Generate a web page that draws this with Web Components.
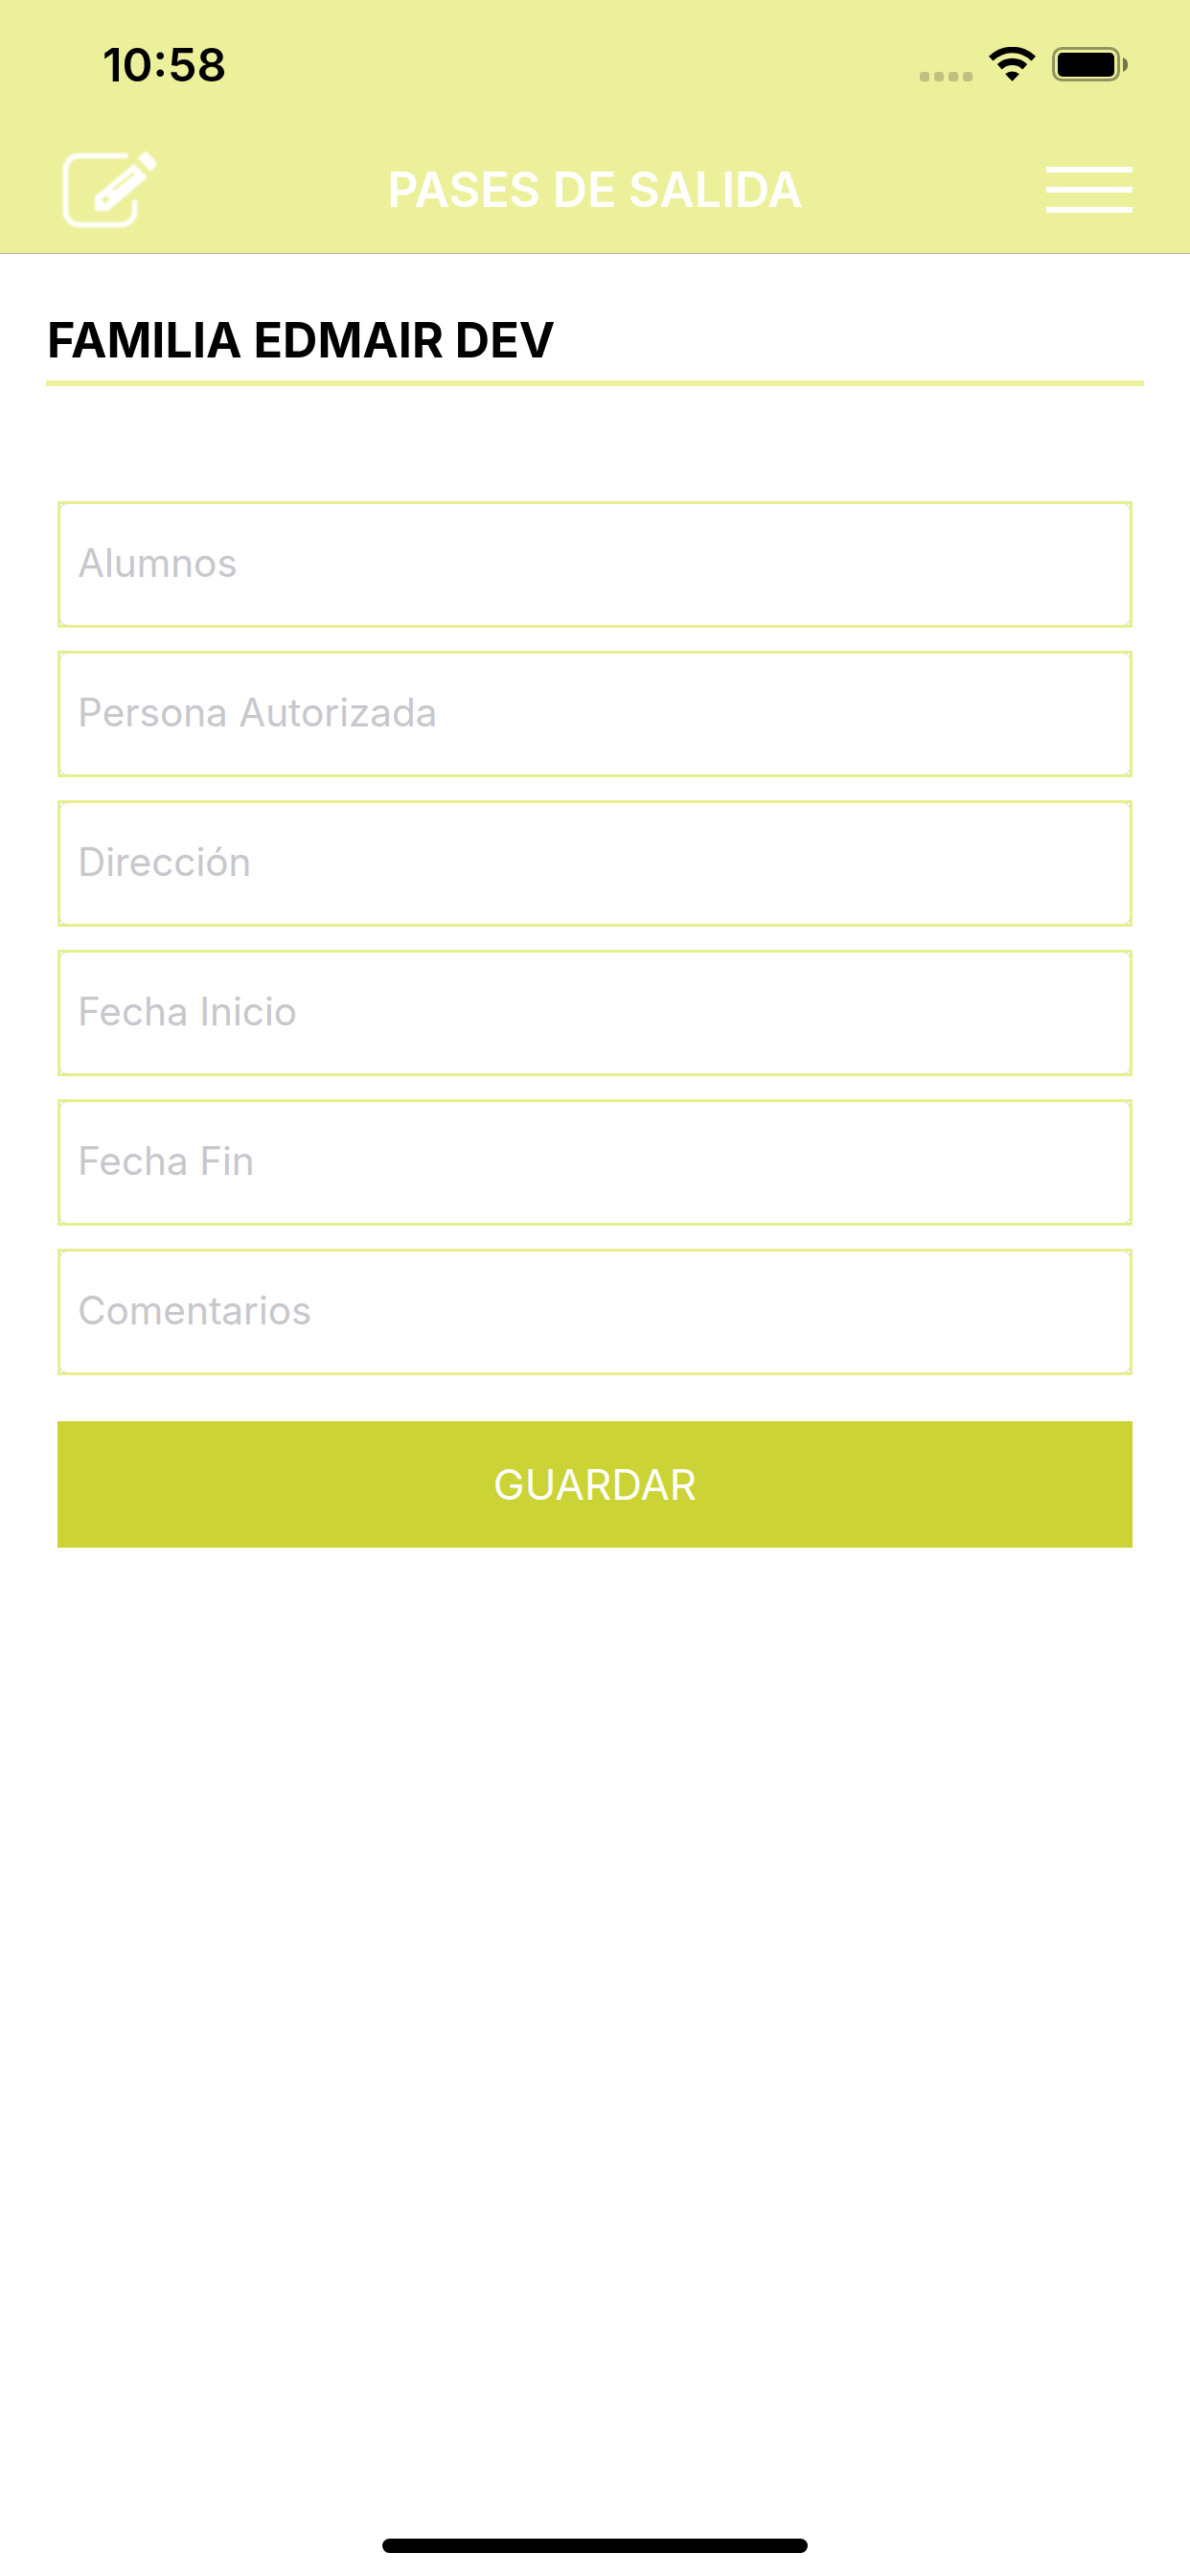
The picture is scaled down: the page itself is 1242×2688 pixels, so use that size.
<!DOCTYPE html>
<html>
<head>
<meta charset="utf-8">
<style>
  html, body { margin: 0; padding: 0; background: #fff; }
  body { width: 1242px; height: 2688px; position: relative; overflow: hidden; font-family: Inter, "Liberation Sans", sans-serif; }
</style>
</head>
<body>
<app-header title="PASES DE SALIDA"></app-header>
<family-title>FAMILIA EDMAIR DEV</family-title>
<pass-form>
  <form-field>Alumnos</form-field>
  <form-field>Persona Autorizada</form-field>
  <form-field>Dirección</form-field>
  <form-field>Fecha Inicio</form-field>
  <form-field>Fecha Fin</form-field>
  <form-field>Comentarios</form-field>
  <save-button>GUARDAR</save-button>
</pass-form>
<home-indicator></home-indicator>

<script>
class AppHeader extends HTMLElement {
  connectedCallback() {
    this.attachShadow({ mode: 'open' });
    this.shadowRoot.innerHTML = `
      <style>
        :host {
          display: block;
          height: 265px;
          box-sizing: border-box;
          background: #edf09b;
          border-bottom: 1px solid #b2b2ae;
        }
        .status {
          height: 136px;
          display: flex;
          align-items: flex-start;
          justify-content: space-between;
          padding: 0 0 0 107px;
        }
        .time {
          margin-top: 42px;
          font: 600 48.5px/52px Inter, "Liberation Sans", sans-serif;
          color: #000;
        }
        .icons { display: flex; align-items: flex-start; padding-right: 65px; }
        .dots { display: flex; gap: 5px; margin: 75px 17px 0 0; }
        .dots i { width: 10px; height: 10px; border-radius: 3px; background: #c0c080; }
        .bar {
          display: grid;
          grid-template-columns: 1fr auto 1fr;
          align-items: center;
          height: 124px;
        }
        h1 {
          margin: 0;
          font: 600 50.2px/56px Inter, "Liberation Sans", sans-serif;
          color: #fff;
        }
        svg { display: block; }
        .edit { margin-left: 60px; filter: blur(0.8px); }
        .menu {
          justify-self: end;
          margin-right: 60px;
          width: 90px;
          display: flex;
          flex-direction: column;
          gap: 15px;
        }
        .menu i { height: 6px; background: #fff; display: block; }
      </style>
      <div class="status">
        <span class="time">10:58</span>
        <div class="icons">
          <div class="dots"><i></i><i></i><i></i><i></i></div>
          <svg width="49" height="36" viewBox="0 0 50 36" style="margin:49px 17px 0 0">
            <path d="M0 9.500 A36 36 0 0 1 50 9.500 L45.500 14.500 A29 29 0 0 0 4.500 14.500Z" fill="#000"/>
            <path d="M9 18 A23 23 0 0 1 41 18 L36 23.500 A16 16 0 0 0 14 23.500Z" fill="#000"/>
            <path d="M17.500 28.500 A11 11 0 0 1 32.500 28.500 L25 36Z" fill="#000"/>
          </svg>
          <svg width="79" height="37" viewBox="0 0 79 37" style="margin:49px 0 0 0">
            <rect x="1.500" y="1.500" width="68" height="33" rx="9" fill="none" stroke="#93955e" stroke-width="3"/>
            <rect x="6" y="6" width="59" height="25" rx="5" fill="#000"/>
            <path d="M74 11 A8 8 0 0 1 74 26Z" fill="#74764b"/>
          </svg>
        </div>
      </div>
      <div class="bar">
        <svg class="edit" width="106" height="84" viewBox="60 156 106 84">
          <path d="M131 162.500 H82 A14 14 0 0 0 68.500 176 V221 A14 14 0 0 0 82 234.500 H127 A14 14 0 0 0 140.500 221 V211" fill="none" stroke="#fff" stroke-width="5.500" stroke-linecap="round"/>
          <path d="M99 220 V205 L140 171 L154 185 L113 220 Z M117 197 L118.500 199.500 L141 181.500 L139.500 179 Z M106 208 L111 204 L115 209 L111 209.500 L110.500 214 Z" fill="#fff" fill-rule="evenodd"/>
          <path d="M144 165 L149 160 Q152 157 155 160 L162 168 Q165 171 162 174 L157 179 Z" fill="#fff"/>
        </svg>
        <h1>${this.getAttribute('title')}</h1>
        <div class="menu"><i></i><i></i><i></i></div>
      </div>
    `;
  }
}

class FamilyTitle extends HTMLElement {
  connectedCallback() {
    this.attachShadow({ mode: 'open' });
    this.shadowRoot.innerHTML = `
      <style>
        :host {
          display: block;
          margin: 0 48px;
          padding-top: 60px;
        }
        .t {
          font: 700 50.3px/56px Inter, "Liberation Sans", sans-serif;
          color: #000;
          height: 78px;
          box-sizing: border-box;
          border-bottom: 6px solid #edf09b;
          padding: 2px 0 0 1px;
        }
      </style>
      <div class="t"><slot></slot></div>
    `;
  }
}

class PassForm extends HTMLElement {
  connectedCallback() {
    this.attachShadow({ mode: 'open' });
    this.shadowRoot.innerHTML = `
      <style>
        :host {
          display: flex;
          flex-direction: column;
          gap: 24px;
          padding: 120px 60px 0 60px;
        }
      </style>
      <slot></slot>
    `;
  }
}

class FormField extends HTMLElement {
  connectedCallback() {
    this.attachShadow({ mode: 'open' });
    this.shadowRoot.innerHTML = `
      <style>
        :host {
          display: flex;
          align-items: center;
          position: relative;
          height: 132px;
          box-sizing: border-box;
          padding: 0 0 2px 21px;
          font: 400 40.5px/48px Inter, "Liberation Sans", sans-serif;
          color: #c7c7cd;
        }
        /* rounded native field sits under the square border, only its corners show */
        :host::before {
          content: '';
          position: absolute;
          inset: 2px;
          border: 1px solid #d4d4d4;
          border-radius: 8px;
        }
        :host::after {
          content: '';
          position: absolute;
          inset: 0;
          border: 3px solid #e6ef8d;
        }
      </style>
      <slot></slot>
    `;
  }
}

class SaveButton extends HTMLElement {
  connectedCallback() {
    this.attachShadow({ mode: 'open' });
    this.shadowRoot.innerHTML = `
      <style>
        :host {
          display: flex;
          align-items: center;
          justify-content: center;
          height: 132px;
          margin-top: 24px;
          background: #cbd335;
          color: #fff;
          font: 400 44px/48px Inter, "Liberation Sans", sans-serif;
        }
      </style>
      <slot></slot>
    `;
  }
}

class HomeIndicator extends HTMLElement {
  connectedCallback() {
    this.attachShadow({ mode: 'open' });
    this.shadowRoot.innerHTML = `
      <style>
        :host {
          position: absolute;
          left: 399px;
          top: 2649px;
          width: 444px;
          height: 15px;
          border-radius: 8px;
          background: #000;
        }
      </style>
    `;
  }
}

customElements.define('app-header', AppHeader);
customElements.define('family-title', FamilyTitle);
customElements.define('pass-form', PassForm);
customElements.define('form-field', FormField);
customElements.define('save-button', SaveButton);
customElements.define('home-indicator', HomeIndicator);
</script>
</body>
</html>
